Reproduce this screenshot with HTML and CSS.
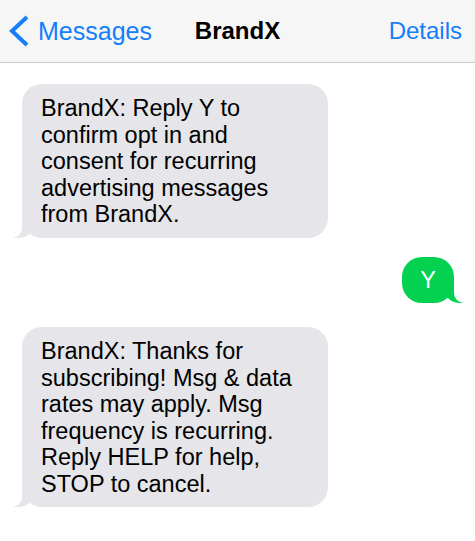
FILE: index.html
```html
<!DOCTYPE html>
<html lang="en">
<head>
    <meta charset="UTF-8">
    <meta name="viewport" content="width=device-width, initial-scale=1.0">
    <title>BrandX</title>
    <link rel="stylesheet" href="styles.css">
</head>
<body>
    <div class="navBar">
        <a class="backLink" href="#">
            <svg class="chevron" width="22" height="32" viewBox="0 0 22 32">
                <polyline points="19,2 4,16 19,30" fill="none" stroke="#147efb" stroke-width="4"/>
            </svg>
            <span>Messages</span>
        </a>
        <div class="navTitle">BrandX</div>
        <a class="detailsLink" href="#">Details</a>
    </div>

    <div class="thread">
        <div class="bubble incoming">BrandX: Reply Y to confirm opt in and consent for recurring advertising messages from BrandX.</div>
        <div class="bubble outgoing">Y</div>
        <div class="bubble incoming">BrandX: Thanks for subscribing! Msg &amp; data rates may apply. Msg frequency is recurring. Reply HELP for help, STOP to cancel.</div>
    </div>
</body>
</html>
```

FILE: styles.css
```css
body {
    margin: 0;
    background-color: #fff;
    font-family: "Liberation Sans", Arial, sans-serif;
}
a {
    text-decoration: none;
}
.navBar {
    display: grid;
    grid-template-columns: 1fr auto 1fr;
    align-items: center;
    height: 62px;
    padding: 0 8px;
    background-color: #f6f6f6;
    border-bottom: 1px solid #c9c9cc;
    font-size: 24px;
}
.backLink {
    display: flex;
    align-items: center;
    gap: 8px;
    font-size: 25px;
    color: #147efb;
}
.chevron {
    flex-shrink: 0;
}
.navTitle {
    font-weight: bold;
    color: #000;
}
.detailsLink {
    justify-self: end;
    margin-right: 5px;
    color: #147efb;
}
.thread {
    display: flex;
    flex-direction: column;
    padding: 21px 21px 20px 22px;
}
.bubble {
    position: relative;
    padding: 11px 19px 10px;
    border-radius: 20px;
    font-size: 23.5px;
    line-height: 26.5px;
}
.incoming {
    align-self: flex-start;
    width: 268px;
    background-color: #e5e5ea;
    color: #000;
}
.outgoing {
    align-self: flex-end;
    margin: 19px 0 24px;
    padding: 10px 18px;
    background-color: #04d150;
    color: #fff;
}
/* tails */
.bubble::before,
.bubble::after {
    content: "";
    position: absolute;
    bottom: 0;
    height: 20px;
}
.incoming::before {
    left: -8px;
    width: 20px;
    background-color: #e5e5ea;
    border-bottom-right-radius: 15px;
}
.incoming::after {
    left: -10px;
    width: 10px;
    background-color: #fff;
    border-bottom-right-radius: 10px;
}
.outgoing::before {
    right: -10px;
    width: 20px;
    background-color: #04d150;
    border-bottom-left-radius: 15px;
}
.outgoing::after {
    right: -12px;
    width: 12px;
    background-color: #fff;
    border-bottom-left-radius: 10px;
}
```
